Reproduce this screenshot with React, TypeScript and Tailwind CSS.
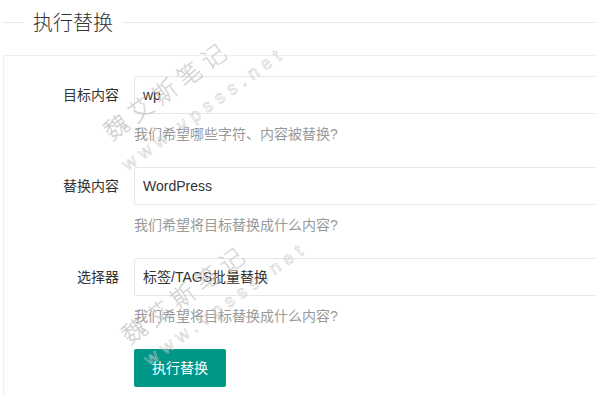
const FIELDS = [
  { label: "目标内容", value: "wp", help: "我们希望哪些字符、内容被替换?" },
  { label: "替换内容", value: "WordPress", help: "我们希望将目标替换成什么内容?" },
  { label: "选择器", value: "标签/TAGS批量替换", help: "我们希望将目标替换成什么内容?" },
];

const WATERMARKS = [
  { text: "魏艾斯笔记", className: "left-[100px] top-[125px] text-[24px] leading-[24px]" },
  { text: "www.vpsss.net", className: "left-[119px] top-[159px] text-[18px] leading-[18px]" },
  { text: "魏艾斯笔记", className: "left-[118px] top-[329px] text-[24px] leading-[24px]" },
  { text: "www.vpsss.net", className: "left-[141px] top-[354px] text-[18px] leading-[18px]" },
];

export default function App() {
  return (
    <div className="relative h-[395px] w-[595px] overflow-hidden bg-white font-['Liberation_Sans','Noto_Sans_CJK_SC',sans-serif] text-[14px] text-[#333]">
      {/* legend */}
      <div className="ml-[3px] flex h-[45px] items-center">
        <div className="h-px w-[20px] bg-[#e6e6e6]" />
        <span className="px-[10px] text-[20px] font-light leading-[24px] text-[#333]">执行替换</span>
        <div className="h-px flex-1 bg-[#e6e6e6]" />
      </div>

      <div className="ml-[3px] mt-[10px] w-[640px] border border-[#eee] pt-[20px] pb-[30px]">
        {FIELDS.map((f) => (
          <div key={f.label} className="mb-[23px] flex last:mb-[24px]">
            <label className="w-[130px] shrink-0 pr-[15px] text-right leading-[38px]">{f.label}</label>
            <div className="flex-1">
              <div className="h-[38px] rounded-[2px] border border-[#e6e6e6] pl-[8px] leading-[36px] text-[#333]">
                {f.value}
              </div>
              <div className="mt-[10px] leading-[20px] text-[#999]">{f.help}</div>
            </div>
          </div>
        ))}
        <div className="pl-[130px]">
          <button className="block h-[38px] rounded-[2px] bg-[#009688] px-[18px] leading-[38px] text-white">
            执行替换
          </button>
        </div>
      </div>

      {WATERMARKS.map((w, i) => (
        <span
          key={i}
          className={`pointer-events-none absolute origin-top-left -rotate-[36deg] whitespace-nowrap font-thin tracking-[6px] text-transparent [-webkit-text-stroke:0.5px_#c8c8c8] ${w.className}`}
        >
          {w.text}
        </span>
      ))}
    </div>
  );
}
